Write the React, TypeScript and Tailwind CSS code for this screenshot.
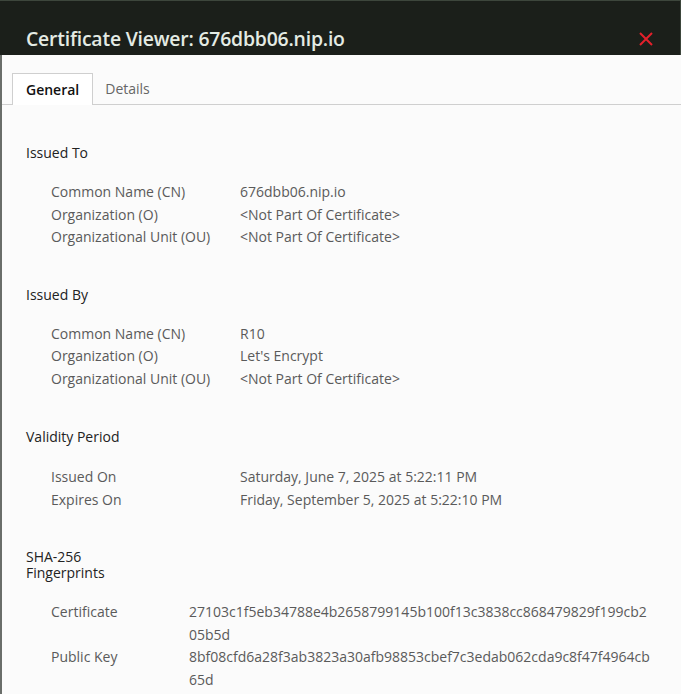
import React from "react";

const font = { fontFamily: '"Open Sans", "Noto Sans", sans-serif' };

function Row({ label, value, labelW, extra = "" }: { label: string; value: React.ReactNode; labelW: string; extra?: string }) {
  return (
    <div className={`flex leading-[22.5px] ${extra}`}>
      <div className={`${labelW} shrink-0 text-[#5a5a5a]`}>{label}</div>
      <div className="text-[#5a5a5a]">{value}</div>
    </div>
  );
}

export default function App() {
  return (
    <div className="w-[681px] h-[694px] overflow-hidden bg-[#fbfbfb] flex flex-col" style={font}>
      <div className="h-[55px] shrink-0 bg-[#1b1f1a] border-t border-[#3d463c] border-r border-r-[#3d463c] flex items-end justify-between pl-[26px] pr-[27px] pb-[2px]">
        <div className="text-[19.4px] font-semibold text-[#e4ebe4] tracking-[-0.2px]">Certificate Viewer: 676dbb06.nip.io</div>
        <svg width="14" height="14" viewBox="0 0 14 14" className="mb-[7px]">
          <path d="M1 1 L13 13 M13 1 L1 13" stroke="#e3202b" strokeWidth="2" />
        </svg>
      </div>
      <div className="flex-1 border-l-2 border-[#6a6e6a] flex flex-col">
        <div className="mt-[18px] flex items-end border-b border-[#cfcfcf] pl-[10px] h-[32px]">
          <div className="h-[32px] px-[13px] bg-white border border-[#cfcfcf] border-b-0 -mb-px flex items-center text-[14px] font-semibold text-[#111]">General</div>
          <div className="h-[31px] px-[12px] flex items-center text-[14px] text-[#666]">Details</div>
        </div>
        <div className="pl-[24px] pt-[37px] text-[14px]">
          <div className="text-[#222] leading-[22px]">Issued To</div>
          <div className="pl-[25px] mt-[17px]">
            <Row labelW="w-[189px]" label="Common Name (CN)" value="676dbb06.nip.io" />
            <Row labelW="w-[189px]" label="Organization (O)" value="<Not Part Of Certificate>" />
            <Row labelW="w-[189px]" label="Organizational Unit (OU)" value="<Not Part Of Certificate>" />
          </div>
          <div className="text-[#222] leading-[22px] mt-[35px]">Issued By</div>
          <div className="pl-[25px] mt-[17px]">
            <Row labelW="w-[189px]" label="Common Name (CN)" value="R10" />
            <Row labelW="w-[189px]" label="Organization (O)" value="Let's Encrypt" />
            <Row labelW="w-[189px]" label="Organizational Unit (OU)" value="<Not Part Of Certificate>" />
          </div>
          <div className="text-[#222] leading-[22px] mt-[36px]">Validity Period</div>
          <div className="pl-[25px] mt-[18px]">
            <Row labelW="w-[189px]" label="Issued On" value="Saturday, June 7, 2025 at 5:22:11 PM" />
            <Row labelW="w-[189px]" label="Expires On" value="Friday, September 5, 2025 at 5:22:10 PM" />
          </div>
          <div className="text-[#222] leading-[16px] mt-[38px]">
            SHA-256
            <br />
            Fingerprints
          </div>
          <div className="pl-[25px] mt-[20px]">
            <Row
              labelW="w-[138px]"
              label="Certificate"
              value={
                <>
                  27103c1f5eb34788e4b2658799145b100f13c3838cc868479829f199cb2
                  <br />
                  05b5d
                </>
              }
            />
            <Row
              labelW="w-[138px]"
              label="Public Key"
              value={
                <>
                  8bf08cfd6a28f3ab3823a30afb98853cbef7c3edab062cda9c8f47f4964cb
                  <br />
                  65d
                </>
              }
            />
          </div>
        </div>
      </div>
    </div>
  );
}
